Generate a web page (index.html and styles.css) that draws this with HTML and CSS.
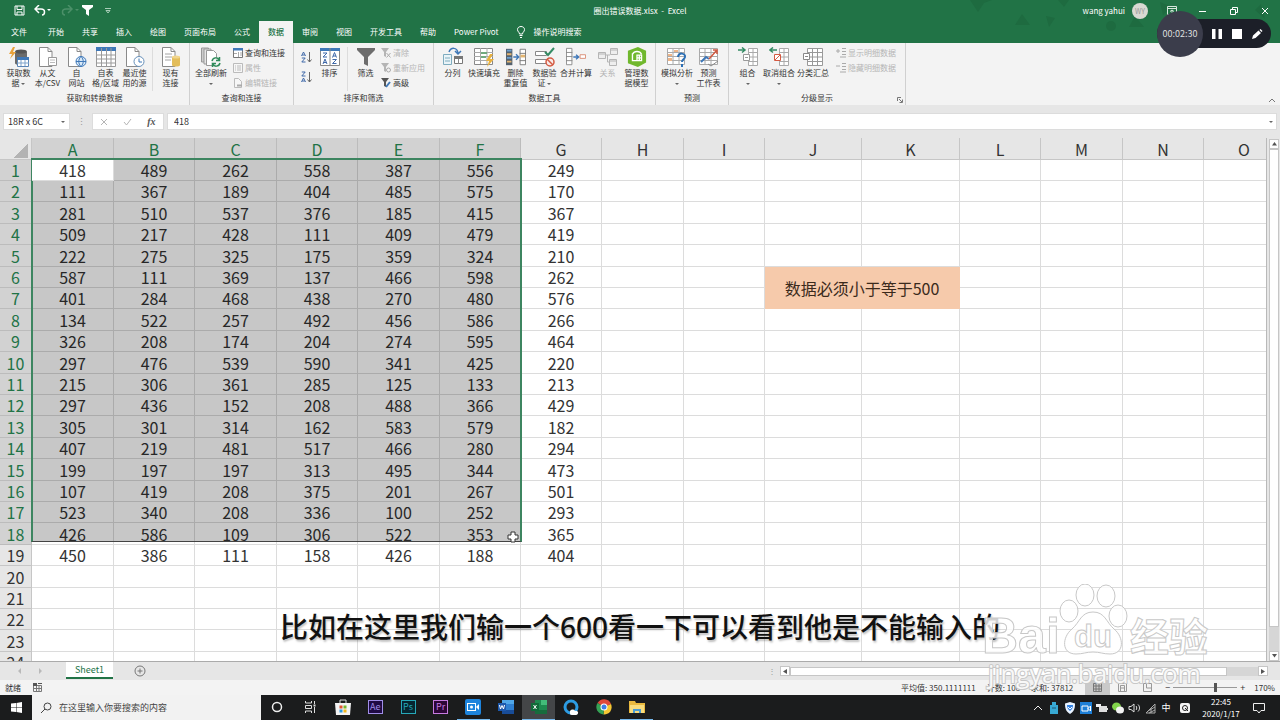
FILE: index.html
```html
<!DOCTYPE html>
<html lang="zh-CN">
<head>
<meta charset="utf-8">
<title>圈出错误数据.xlsx - Excel</title>
<link rel="stylesheet" href="styles.css">
</head>
<body>
<svg class="defs" aria-hidden="true">
  <symbol id="page" viewBox="0 0 20 20"><path d="M1.500 .5h8.500l4 4v15h-12.500z" fill="#fff" stroke="#8a8a8a"/><path d="M10 .5v4h4" fill="none" stroke="#8a8a8a"/></symbol>
  <symbol id="getdata" viewBox="0 0 20 20"><path d="M6 5v11c0 3 12 3 12 0V5z" fill="#6b6b6b"/><ellipse cx="12" cy="4.500" rx="6" ry="2" fill="#555"/><path d="M4 0L0 7h3L1 12l6-7H4l2-5z" fill="#e9a23b"/><path d="M8.500 10.500h11v9h-11z" fill="#fff" stroke="#5a84b5"/><path d="M8 10h12v3H8z" fill="#3f78b8"/><path d="M12 13v6M16 13v6M8 16h12" stroke="#7fa3cb"/></symbol>
  <symbol id="csv" viewBox="0 0 20 20"><use href="#page" width="20" height="20"/><path d="M10.500 10.500h8v8h-8z" fill="#fff" stroke="#999"/><path d="M12 13h5M12 15.500h5" stroke="#bbb"/></symbol>
  <symbol id="web" viewBox="0 0 20 20"><use href="#page" width="20" height="20"/><circle cx="14" cy="14.500" r="5" fill="#d9e9f7" stroke="#3f78b8"/><path d="M9 14.500h10M14 9.500c-3 3-3 7 0 10c3-3 3-7 0-10" fill="none" stroke="#3f78b8"/></symbol>
  <symbol id="table" viewBox="0 0 20 20"><path d="M.5.5h19v19H.5z" fill="#fff" stroke="#999"/><path d="M0 0h20v4H0z" fill="#3f78b8"/><path d="M5.500 1v18M10.500 1v18M15 1v18M0 8h20M0 12h20M0 16h20" stroke="#9a9a9a"/></symbol>
  <symbol id="recent" viewBox="0 0 20 20"><use href="#page" width="20" height="20"/><circle cx="14" cy="14.500" r="5" fill="#fff" stroke="#668fb9"/><path d="M14 11.500v3.500h3" fill="none" stroke="#3f78b8"/></symbol>
  <symbol id="conn" viewBox="0 0 20 20"><use href="#page" width="20" height="20"/><path d="M4 7h7M4 10h7M4 13h6" stroke="#a4a4a4"/><path d="M11 10v8c0 2 8 2 8 0v-8z" fill="#e3bd59"/><ellipse cx="15" cy="10" rx="4" ry="1.500" fill="#f1d58b"/></symbol>
  <symbol id="refresh" viewBox="0 0 20 20"><path d="M.5 1h7v14h-7z" fill="#ccc" stroke="#999"/><path d="M3 2h7v15H3z" fill="#e6e6e6" stroke="#999"/><path d="M5.500 3.500h7l3 3v12h-10z" fill="#fff" stroke="#999"/><circle cx="15" cy="15" r="5" fill="#f3f3f3"/><path d="M11 14c1-4 6-4 7-1M19 16c-1 4-6 4-7 1M18.500 10v3.500H15M11.500 20v-3.500H15" fill="none" stroke="#2f8b5b" stroke-width="1.500"/></symbol>
  <symbol id="panel" viewBox="0 0 10 10"><path d="M.5.5h9v9h-9z" fill="#fff" stroke="#777"/><path d="M0 0h10v2.500H0z" fill="#3f78b8"/><path d="M5.500 4v5M7 5h2M7 7h2M1 5.500h3" stroke="#aaa"/></symbol>
  <symbol id="props" viewBox="0 0 10 10"><path d="M.5.5h9v9h-9z" fill="#f6f6f6" stroke="#bbb"/><path d="M2 3h1M2 5h1M2 7h1M4 3h4M4 5h4M4 7h4" stroke="#bbb"/></symbol>
  <symbol id="links" viewBox="0 0 10 10"><path d="M1.500.5h4l3 3v6h-7z" fill="#f6f6f6" stroke="#bbb"/><path d="M4 7.500h5" stroke="#aaa" stroke-width="2"/></symbol>
  <symbol id="az" viewBox="0 0 11 12"><path d="M.5 5L2.500 1L4.500 5M1.200 4h2.600M.8 7h3.400L.8 11h3.700" fill="none" stroke="#3f68a8"/><path d="M8.500 1v10M6.500 8.500l2 2.500l2-2.500" fill="none" stroke="#666"/></symbol>
  <symbol id="za" viewBox="0 0 11 12"><path d="M.8 1h3.400L.8 5h3.700M.5 11l2-4l2 4M1.200 10h2.600" fill="none" stroke="#3f68a8"/><path d="M8.500 1v10M6.500 8.500l2 2.500l2-2.500" fill="none" stroke="#666"/></symbol>
  <symbol id="sort" viewBox="0 0 20 18"><path d="M.5.500h19v17H.5z" fill="#fff" stroke="#888"/><path d="M0 0h20v3H0z" fill="#3f78b8"/><path d="M10 0v18" stroke="#888"/><path d="M3 5h4L3 9h4M12.500 9.500l2-5l2 5M13 8h3M3 16l2-5l2 5M3.500 14.500h3M12.500 11.500h4l-4 4h4" fill="none" stroke="#3f68a8"/></symbol>
  <symbol id="funnel" viewBox="0 0 20 20"><path d="M1 1h18v2l-7 7v9l-4-2v-7L1 3z" fill="#6d6d6d"/></symbol>
  <symbol id="fclear" viewBox="0 0 10 10"><path d="M0 0h8L5 4v5L3 8V4z" fill="#b5b5b5"/><path d="M5.500 5l4 4.500M9.500 5l-4 4.500" stroke="#aaa"/></symbol>
  <symbol id="freapply" viewBox="0 0 10 10"><path d="M0 0h8L5 4v5L3 8V4z" fill="#b5b5b5"/><circle cx="7.500" cy="7" r="2" fill="#f3f3f3" stroke="#aaa"/></symbol>
  <symbol id="fadv" viewBox="0 0 10 10"><path d="M0 0h8L5 4v5L3 8V4z" fill="#555"/><path d="M5 9l4-5" stroke="#3f78b8" stroke-width="2"/></symbol>
  <symbol id="split" viewBox="0 0 20 20"><path d="M.5 7.500h8v10h-8z" fill="#eaf4f8" stroke="#7facbf"/><path d="M2 11h5M2 14h5" stroke="#7facbf"/><path d="M11.500 9.500h8v7h-8z" fill="#fff" stroke="#777"/><path d="M11 9h9v3h-9z" fill="#777"/><path d="M15.500 12v5" stroke="#888"/><path d="M6 5c2-5 8-5 9 1M12 4l3 3l3-3" fill="none" stroke="#3f78b8" stroke-width="1.500"/></symbol>
  <symbol id="flash" viewBox="0 0 20 20"><path d="M.5 1.500h18v16H.5z" fill="#fff" stroke="#888"/><path d="M0 5.500h19M0 9.500h19M0 13.500h19M6.500 1v16M13 1v16" stroke="#a9a9a9"/><path d="M7 6h6M7 10h5" stroke="#71a97f" stroke-width="2"/><path d="M16 7l-4 7h3l-2 6l7-8h-4l3-5z" fill="#e9b23f"/></symbol>
  <symbol id="dedupe" viewBox="0 0 22 20"><path d="M0 1h7v18H0z" fill="#52616f"/><path d="M1 3h5M1 11h5" stroke="#6ca0d0" stroke-width="2"/><path d="M1 7h5M1 15h5" stroke="#e3b571" stroke-width="2"/><path d="M15.500 1.500h6v17h-6zM15 6h7M15 14h7" fill="#fff" stroke="#777"/><path d="M16 9h5" stroke="#e3b571" stroke-width="3"/><path d="M8 10h6M11 7l3 3l-3 3" fill="none" stroke="#3f78b8" stroke-width="1.500"/></symbol>
  <symbol id="valid" viewBox="0 0 20 20"><path d="M.5 4.500h11v4H.5zM.5 12.500h11v4H.5z" fill="#fff" stroke="#888"/><path d="M10 5l3 3l6-7" fill="none" stroke="#358b64" stroke-width="2"/><circle cx="15" cy="15" r="4" fill="#f8ebe8" stroke="#d45a42" stroke-width="1.500"/><path d="M12 12l6 6" stroke="#d45a42" stroke-width="1.500"/></symbol>
  <symbol id="merge" viewBox="0 0 22 20"><path d="M.5.5h6v18h-6zM0 5h7M0 9.500h7M0 14h7" fill="#fff" stroke="#888"/><path d="M8 10h6M11 7.500l3 2.500l-3 2.500" fill="none" stroke="#3f78b8" stroke-width="1.500"/><path d="M15.500 7.500h6v4h-6z" fill="#fff" stroke="#d88a72"/></symbol>
  <symbol id="relation" viewBox="0 0 20 20"><path d="M.5 5.500h7v6h-7zM12.500 1.500h7v6h-7zM11.500 12.500h7v6h-7z" fill="#eee" stroke="#b5b5b5"/><path d="M8 8h4M9.500 8v7h2M1 7h6M13 3h6M12 14h6" fill="none" stroke="#b5b5b5"/></symbol>
  <symbol id="model" viewBox="0 0 20 22"><path d="M0 4L11 0l9 4v13l-9 5l-11-4z" fill="#70b82d"/><path d="M5 8c2-4 8-4 10 0M5 7v8h5M10 9h5v6h-5zM12.500 9v6M10 12h5" fill="none" stroke="#fff" stroke-width="1.500"/></symbol>
  <symbol id="whatif" viewBox="0 0 20 20"><path d="M.5 1.500h17v16H.5zM0 5.500h18M0 9.500h18M0 13.500h18M6 1v17M12 1v17" fill="#fff" stroke="#aaa"/><path d="M1 7h4v2H1zM1 11h4v3H1zM7 3h4v2H7z" fill="#eeb588"/><path d="M11 10c0-5 8-4 7 0c0 2-3 2-3 5M15 17v3" fill="none" stroke="#2d70b5" stroke-width="2"/></symbol>
  <symbol id="forecast" viewBox="0 0 20 20"><path d="M.5 1.500h18v16H.5zM0 5.500h18M0 9.500h18M0 13.500h18M6 1v17M12 1v17" fill="#fff" stroke="#aaa"/><path d="M2 15l5-5l3 2" fill="none" stroke="#3f78b8" stroke-width="2"/><path d="M10 12l8-9M14 3h4v4" fill="none" stroke="#cf5840" stroke-width="1.500"/><path d="M9 17l3 2l7-5" fill="none" stroke="#888"/></symbol>
  <symbol id="group" viewBox="0 0 20 20"><path d="M10.500 1.500h9v17h-9zM10 5.500h10M10 10h10M10 14.500h10M15 1v17" fill="#fff" stroke="#aaa"/><path d="M0 3h7M4 .5L7 3L4 5.500" fill="none" stroke="#358b64" stroke-width="1.500"/><path d="M5.500 7.500h6v6h-6zM7 10.500h3" fill="#fff" stroke="#999"/></symbol>
  <symbol id="ungroup" viewBox="0 0 20 20"><path d="M10.500 1.500h9v17h-9zM10 5.500h10M10 10h10M10 14.500h10M15 1v17" fill="#fff" stroke="#aaa"/><path d="M8 3H1M4 .5L1 3l3 2.500" fill="none" stroke="#358b64" stroke-width="1.500"/><path d="M5.500 7.500h6v6h-6zM6 13l5-5" fill="#fff" stroke="#d45a42"/></symbol>
  <symbol id="subtotal" viewBox="0 0 20 20"><path d="M4.500 1.500h15v17h-15zM4 5.500h16M4 10h16M4 14.500h16M9.500 1v17M14.500 1v17" fill="#fff" stroke="#999"/><path d="M.5 6.500h6v6h-6zM2 9.500h3" fill="#fff" stroke="#888"/></symbol>
  <symbol id="detail" viewBox="0 0 10 10"><path d="M0 3h4M2 1v4M6 .5h4M6 3.500h4M6 6.500h4M4 9h6" stroke="#aaa" fill="none"/></symbol>
  <symbol id="nodetail" viewBox="0 0 10 10"><path d="M0 3h4M6 .5h4M6 3.500h4M6 6.500h4M4 9h6" stroke="#aaa" fill="none"/></symbol>
</svg>

<header class="topbar">
  <svg class="pattern" viewBox="0 0 310 42" aria-hidden="true"><path d="M0 0l8 12L14 3l8-3zM52 14l8 11H45zM76 16l9 2-6 9zM88 0l6 7 5-7zM118 8l8 5-9 6zM165 16l9 11h-15zM190 2l12 5-9 8zM285 10l10 9-4-15z"/><circle cx="141" cy="26" r="5"/></svg>
  <div class="titlebar">
    <div class="quick">
      <button aria-label="保存"><svg width="11" height="11" viewBox="0 0 11 11"><path d="M1 1h9v9H1zM3 1v3.500h5V1M3 10V7h5v3" fill="none" stroke="#fff"/></svg></button>
      <button aria-label="撤消"><svg width="18" height="11" viewBox="0 0 18 11"><path d="M5 0L1 4l4 4M1 4h6c5 0 4 6 1 6" fill="none" stroke="#fff" stroke-width="1.500"/><path d="M13 4h4l-2 2z" fill="#fff"/></svg></button>
      <button aria-label="恢复" disabled><svg width="18" height="11" viewBox="0 0 18 11"><path d="M7 0l4 4-4 4M11 4H5c-5 0-4 6-1 6" fill="none" stroke="#4c9069" stroke-width="1.500"/><path d="M14 4h4l-2 2z" fill="#4c9069"/></svg></button>
      <button aria-label="筛选"><svg width="11" height="11" viewBox="0 0 11 11"><path d="M0 0h11v2L7 5v6L4 9V5L0 2z" fill="#fff"/></svg></button>
      <button aria-label="自定义"><svg width="6" height="6" viewBox="0 0 6 6"><path d="M0 .5h6M1 2.500h4L3 5z" fill="none" stroke="#a9cdb8"/></svg></button>
    </div>
    <div class="doc">圈出错误数据.xlsx&nbsp; -&nbsp; Excel</div>
    <div class="account"><span>wang yahui</span><span class="avatar">WY</span>
      <button aria-label="功能区选项"><svg width="10" height="9" viewBox="0 0 10 9"><path d="M.5.500h9v8h-9zM0 2.500h10M5 7V4M3 5.500L5 4l2 1.500" fill="none" stroke="#d7e8dd"/></svg></button>
      <button aria-label="最小化"><svg width="8" height="8" viewBox="0 0 8 8"><path d="M0 4.500h7" stroke="#fff"/></svg></button>
      <button aria-label="还原"><svg width="8" height="8" viewBox="0 0 8 8"><path d="M.5 2.500h5v5h-5zM2.500 2V.500h5v5H6" fill="none" stroke="#fff"/></svg></button>
      <button aria-label="关闭"><svg width="8" height="8" viewBox="0 0 8 8"><path d="M1 1l6 6M7 1L1 7" stroke="#fff"/></svg></button>
    </div>
  </div>
  <nav class="tabs">
    <button class="file">文件</button><button>开始</button><button>共享</button><button>插入</button><button>绘图</button><button>页面布局</button><button>公式</button><button class="active">数据</button><button>审阅</button><button>视图</button><button>开发工具</button><button>帮助</button><button>Power Pivot</button>
    <button class="tell"><svg width="8" height="12" viewBox="0 0 8 12"><path d="M2.500 8C2.500 6 .5 6 .5 3.500C.5-.5 7.500-.5 7.500 3.500C7.500 6 5.500 6 5.500 8zM2.500 9.500h3M3 11.500h2" fill="none" stroke="#fff"/></svg>操作说明搜索</button>
  </nav>
</header>

<section class="ribbon" aria-label="数据">
  <div class="group g-get"><div class="tools">
    <button class="tool"><svg><use href="#getdata"/></svg>获取数<br>据 <i class="caret"></i></button>
    <button class="tool"><svg><use href="#csv"/></svg>从文<br>本/CSV</button>
    <button class="tool"><svg><use href="#web"/></svg>自<br>网站</button>
    <button class="tool"><svg><use href="#table"/></svg>自表<br>格/区域</button>
    <button class="tool"><svg><use href="#recent"/></svg>最近使<br>用的源</button>
    <span class="rule"></span>
    <button class="tool"><svg><use href="#conn"/></svg>现有<br>连接</button>
  </div><h2>获取和转换数据</h2></div>
  <div class="group g-query"><div class="tools">
    <button class="tool wide"><svg><use href="#refresh"/></svg>全部刷新<br><i class="caret"></i></button>
    <div class="stack"><button><svg><use href="#panel"/></svg>查询和连接</button><button disabled><svg><use href="#props"/></svg>属性</button><button disabled><svg><use href="#links"/></svg>编辑链接</button></div>
  </div><h2>查询和连接</h2></div>
  <div class="group g-sort"><div class="tools">
    <div class="azs"><button aria-label="升序"><svg><use href="#az"/></svg></button><button aria-label="降序"><svg><use href="#za"/></svg></button></div>
    <button class="tool"><svg><use href="#sort"/></svg>排序</button>
    <span class="rule"></span>
    <button class="tool"><svg><use href="#funnel"/></svg>筛选</button>
    <div class="stack"><button disabled><svg><use href="#fclear"/></svg>清除</button><button disabled><svg><use href="#freapply"/></svg>重新应用</button><button><svg><use href="#fadv"/></svg>高级</button></div>
  </div><h2>排序和筛选</h2></div>
  <div class="group g-tools"><div class="tools">
    <button class="tool"><svg><use href="#split"/></svg>分列</button>
    <button class="tool wide"><svg><use href="#flash"/></svg>快速填充</button>
    <button class="tool"><svg><use href="#dedupe"/></svg>删除<br>重复值</button>
    <button class="tool"><svg><use href="#valid"/></svg>数据验<br>证 <i class="caret"></i></button>
    <button class="tool wide"><svg><use href="#merge"/></svg>合并计算</button>
    <button class="tool" disabled><svg><use href="#relation"/></svg>关系</button>
    <button class="tool"><svg><use href="#model"/></svg>管理数<br>据模型</button>
  </div><h2>数据工具</h2></div>
  <div class="group g-fore"><div class="tools">
    <button class="tool wide"><svg><use href="#whatif"/></svg>模拟分析<br><i class="caret"></i></button>
    <button class="tool"><svg><use href="#forecast"/></svg>预测<br>工作表</button>
  </div><h2>预测</h2></div>
  <div class="group g-outline"><div class="tools">
    <button class="tool"><svg><use href="#group"/></svg>组合<br><i class="caret"></i></button>
    <button class="tool wide"><svg><use href="#ungroup"/></svg>取消组合<br><i class="caret"></i></button>
    <button class="tool wide"><svg><use href="#subtotal"/></svg>分类汇总</button>
    <div class="stack"><button disabled><svg><use href="#detail"/></svg>显示明细数据</button><button disabled><svg><use href="#nodetail"/></svg>隐藏明细数据</button></div>
  </div><h2>分级显示</h2>
    <svg class="launcher" width="6" height="6" viewBox="0 0 6 6"><path d="M.5 4V.500H4M2 2l3 3M5.500 2.500v3h-3" fill="none" stroke="#777"/></svg>
  </div>
  <button class="collapse" aria-label="折叠功能区"><svg width="8" height="5" viewBox="0 0 8 5"><path d="M1 4l3-3 3 3" fill="none" stroke="#777"/></svg></button>
</section>

<section class="formula">
  <div class="namebox"><input aria-label="名称框" value="18R x 6C"><i class="caret"></i></div>
  <span class="dots">⋮</span>
  <div class="fx"><button aria-label="取消"><svg width="8" height="8" viewBox="0 0 8 8"><path d="M1 1l6 6M7 1L1 7" stroke="#b5b5b5"/></svg></button><button aria-label="输入"><svg width="9" height="8" viewBox="0 0 9 8"><path d="M1 4l2.500 3L8 1" fill="none" stroke="#b5b5b5"/></svg></button><button class="fn" aria-label="插入函数">fx</button></div>
  <div class="content"><input aria-label="编辑栏" value="418"><i class="caret"></i></div>
</section>

<main class="work">
  <div class="sheet">
    <table>
      <colgroup id="cols"></colgroup>
      <thead><tr id="letters"></tr></thead>
      <tbody id="rows"></tbody>
    </table>
    <div class="selection"></div>
    <svg class="cursor" width="12" height="12" viewBox="0 0 12 12"><path d="M4 1h4v3h3v4H8v3H4V8H1V4h3z" fill="#fff" stroke="#333"/></svg>
  </div>
  <div class="vscroll"><button aria-label="向上"><svg width="5" height="4" viewBox="0 0 5 4"><path d="M0 3.500h5L2.500 0z" fill="#555"/></svg></button><span class="thumb"></span><span class="track"></span><button aria-label="向下"><svg width="5" height="4" viewBox="0 0 5 4"><path d="M0 0h5L2.500 3.500z" fill="#555"/></svg></button></div>
</main>

<div class="sheetbar">
  <span class="nav"><svg width="26" height="6" viewBox="0 0 26 6"><path d="M4 0L1 3l3 3zM22 0l3 3-3 3z" fill="#b9b9b9"/></svg></span>
  <button class="sheettab">Sheet1</button>
  <button class="add" aria-label="新工作表"><svg width="12" height="12" viewBox="0 0 12 12"><circle cx="6" cy="6" r="5" fill="none" stroke="#777"/><path d="M6 3.500v5M3.500 6h5" stroke="#777"/></svg></button>
  <div class="hscroll"><span class="grip">⋮</span><button aria-label="向左"><svg width="4" height="5" viewBox="0 0 4 5"><path d="M4 0v5L0 2.500z" fill="#555"/></svg></button><span class="thumb"></span><span class="track"></span><button aria-label="向右"><svg width="4" height="5" viewBox="0 0 4 5"><path d="M0 0v5l4-2.500z" fill="#555"/></svg></button></div>
</div>

<div class="status">
  <span>就绪</span>
  <svg width="9" height="9" viewBox="0 0 9 9"><path d="M.5 2.500h8v6h-8zM0 5.500h9M3.500 3v5M6 3v5" fill="none" stroke="#777"/><path d="M0 0h4v3H0zM5 0h4v1H5z" fill="#555"/></svg>
  <div class="stats"><span>平均值: 350.1111111</span><span>计数: 108</span><span>求和: 37812</span></div>
  <div class="views">
    <button class="on" aria-label="普通"><svg width="9" height="9" viewBox="0 0 9 9"><path d="M.5.500h8v8h-8zM3 0v9M6 0v9M0 3h9M0 6h9" fill="none" stroke="#777"/></svg></button>
    <button aria-label="页面布局"><svg width="9" height="9" viewBox="0 0 9 9"><path d="M.5.500h8v8h-8zM2.500 2.500h4v6M2.500 5h4M2.500 2.500v6" fill="none" stroke="#999"/></svg></button>
    <button aria-label="分页预览"><svg width="9" height="9" viewBox="0 0 9 9"><path d="M.5.500h8v8h-8zM3.500 0v5h5" fill="none" stroke="#999"/></svg></button>
  </div>
  <label class="zoom"><span>−</span><input type="range" min="0" max="100" value="66" aria-label="缩放"><span>+</span></label>
  <span class="pct">170%</span>
</div>

<footer class="taskbar">
  <button class="start" aria-label="开始"><svg width="11" height="11" viewBox="0 0 11 11"><path d="M0 1.500L5 1v4H0zM5.500 1L11 0v5H5.500zM0 5.500h5v4.500L0 9.500zM5.500 5.500H11V11l-5.500-1z" fill="#fff"/></svg></button>
  <label class="search"><svg width="12" height="12" viewBox="0 0 12 12"><circle cx="7.500" cy="4.500" r="3.500" fill="none" stroke="#444"/><path d="M5 7L1 11" stroke="#444"/></svg><input aria-label="搜索" placeholder="在这里输入你要搜索的内容"></label>
  <div class="apps">
    <button aria-label="Cortana"><svg width="12" height="12" viewBox="0 0 12 12"><circle cx="6" cy="6" r="4.500" fill="none" stroke="#eee" stroke-width="1.500"/></svg></button>
    <button aria-label="任务视图"><svg width="12" height="12" viewBox="0 0 12 12"><path d="M1.500 0v2h6V0M1.500 4.500h6v3h-6zM1.500 12v-2h6v2M10.500 0v3M10.500 6v6" fill="none" stroke="#ddd"/><path d="M9.500 3.500h2v2h-2z" fill="#ddd"/></svg></button>
    <button aria-label="应用商店"><svg width="16" height="16" viewBox="0 0 16 16"><path d="M5 5V1h6v4" fill="none" stroke="#ddd"/><path d="M0 4h16l-1 12H1z" fill="#f4f4f4"/><path d="M4.500 6.500h3v3h-3z" fill="#e0512f"/><path d="M8.500 6.500h3v3h-3z" fill="#77b52b"/><path d="M4.500 10.500h3v3h-3z" fill="#2a9be0"/><path d="M8.500 10.500h3v3h-3z" fill="#f3b71b"/></svg></button>
    <button><span class="adobe ae">Ae</span></button>
    <button><span class="adobe ps">Ps</span></button>
    <button><span class="adobe pr">Pr</span></button>
    <button class="run" aria-label="录屏"><svg width="16" height="16" viewBox="0 0 16 16"><rect width="16" height="16" rx="2" fill="#1d84dd"/><rect x="2.500" y="4.500" width="8" height="7" fill="none" stroke="#fff"/><circle cx="6.500" cy="8" r="1.500" fill="#fff"/><path d="M11 8l3-3v6z" fill="#fff"/></svg></button>
    <button aria-label="Word"><svg width="16" height="14" viewBox="0 0 16 14"><path d="M4 0h12v14H4z" fill="#2f7fd0"/><path d="M4 0h12v4H4z" fill="#50a7e8"/><path d="M4 10h12v4H4z" fill="#184c98"/><path d="M0 3h8v8H0z" fill="#1d58ac"/><path d="M1.500 5l1 4L4 5.500L5.500 9l1-4" fill="none" stroke="#fff"/></svg></button>
    <button class="run current" aria-label="Excel"><svg width="16" height="14" viewBox="0 0 16 14"><path d="M4 0h12v14H4z" fill="#1e8b50"/><path d="M10 0h6v5h-6z" fill="#43bd7a"/><path d="M4 10h12v4H4z" fill="#176c3d"/><path d="M0 3h8v8H0z" fill="#126b3a"/><path d="M2.500 5l3 4M5.500 5l-3 4" stroke="#fff"/></svg></button>
    <button aria-label="QQ浏览器"><svg width="16" height="16" viewBox="0 0 16 16"><circle cx="8" cy="8" r="6" fill="none" stroke="#2d9ce3" stroke-width="3"/><path d="M7 14c-1-3 3-5 5-2c4-1 4 4 1 4H9c-2 0-2-1-2-2" fill="#fff"/></svg></button>
    <button aria-label="Chrome"><svg width="16" height="16" viewBox="0 0 16 16"><path d="M8 8L1.500 4A7.500 7.500 0 0 1 15 5z" fill="#e0483b"/><path d="M8 8l7-3a7.500 7.500 0 0 1-7.500 10.500z" fill="#f6c733"/><path d="M8 8l-.5 7.500A7.500 7.500 0 0 1 1.500 4z" fill="#35a255"/><circle cx="8" cy="8" r="3.500" fill="#fff"/><circle cx="8" cy="8" r="2.500" fill="#3f7ee8"/></svg></button>
    <button class="run" aria-label="文件资源管理器"><svg width="16" height="14" viewBox="0 0 16 14"><path d="M0 1h6l1 2h9v10H0z" fill="#e9b93f"/><path d="M1 5h14v8H1z" fill="#f8dc7e"/><path d="M4 9h8v4h-2v-2H6v2H4z" fill="#4a9bd4"/></svg></button>
  </div>
  <div class="tray">
    <svg viewBox="0 0 12 12"><path d="M2 8l4-4 4 4" fill="none" stroke="#eee"/></svg>
    <svg viewBox="0 0 12 12"><path d="M4 0h4v3h2v9H2V3h2z" fill="#38a9d3"/><path d="M4 6h4" stroke="#1c5978"/></svg>
    <svg viewBox="0 0 12 12"><path d="M1 1.500L6 0l5 1.500c0 5-1 8-5 10.500C2 9.500 1 6.500 1 1.500" fill="#e9f3ff"/><path d="M3 3h6c0 3-1 4-3 6C4 7 3 6 3 3" fill="#3382e3"/><path d="M4 5l2 2 2-2" fill="none" stroke="#fff"/></svg>
    <svg viewBox="0 0 12 12"><path d="M0 0h12v12H0z" fill="#1d7fd7"/><path d="M2 4h6v5H2zM8 6.500L10.500 4v5z" fill="none" stroke="#fff"/></svg>
    <svg viewBox="0 0 12 12"><path d="M3 4h8v6H3zM11 6h1v2h-1z" fill="#ddd"/><path d="M0 2h5v3H0z" fill="#eee"/></svg>
    <svg viewBox="0 0 12 12"><ellipse cx="4.500" cy="4.500" rx="4.500" ry="4" fill="#82d34b"/><ellipse cx="8" cy="8" rx="4" ry="3.500" fill="#f3f3f3"/></svg>
    <svg viewBox="0 0 12 12"><path d="M1 4.500h2L6 2v8L3 7.500H1zM8 4c1 1 1 3 0 4M10 2.500c2 2 2 5 0 7" fill="none" stroke="#ddd"/></svg>
    <svg viewBox="0 0 12 12"><path d="M2 11L11 2v9zM4 9l7-4M5 11l6-3M7 11V6" fill="none" stroke="#aaa"/></svg>
    <span class="ime">中</span>
    <svg viewBox="0 0 12 12"><rect x="1" y="1" width="10" height="10" rx="2" fill="#f5f5f5"/><circle cx="6" cy="6" r="2.500" fill="none" stroke="#222"/><path d="M6 6l3 3" stroke="#222"/></svg>
    <time><span>22:45</span><span>2020/1/17</span></time>
    <svg viewBox="0 0 12 12"><path d="M.5 1.500h11v7H8L6 11L4 8.500H.5z" fill="none" stroke="#eee"/></svg>
  </div>
</footer>

<div class="recorder"><span class="timer">00:02:30</span>
  <button aria-label="暂停"><svg width="12" height="12" viewBox="0 0 12 12"><path d="M1 1h3.500v10H1zM7.500 1H11v10H7.500z" fill="#fff"/></svg></button>
  <button aria-label="停止"><svg width="12" height="12" viewBox="0 0 12 12"><path d="M1 1h10v10H1z" fill="#fff"/></svg></button>
  <button aria-label="画笔"><svg width="12" height="12" viewBox="0 0 12 12"><path d="M1 11l1-3.500L7.500 2.500L10 5L4.500 10zM8.500 2l1-1L11.500 3l-1 1z" fill="#fff"/></svg></button>
</div>

<p class="caption">比如在这里我们输一个600看一下可以看到他是不能输入的</p>

<svg class="watermark" viewBox="0 0 240 112" role="img" aria-label="Baidu经验 jingyan.baidu.com">
  <g class="outline">
    <ellipse cx="87" cy="27" rx="9" ry="11"/>
    <ellipse cx="103" cy="11" rx="9" ry="11"/>
    <ellipse cx="124" cy="12" rx="9" ry="11"/>
    <ellipse cx="136" cy="32" rx="9" ry="11"/>
    <path d="M111 28c-12 0-13 10-21 17c-10 8-11 25 4 25c7 0 10-2 17-2s10 2 17 2c15 0 14-17 4-25c-8-7-9-17-21-17z"/>
    <text x="0" y="69" class="bai">Bai</text>
    <text x="148" y="67" class="jing">经验</text>
    <text x="92" y="63" class="du">du</text>
  </g>
  <text x="6" y="99" class="url">jingyan.baidu.com</text>
</svg>
<script src="script.js"></script>
</body>
</html>
```

FILE: styles.css
```css
* { box-sizing: border-box; }
body {
  margin: 0;
  height: 100vh;
  display: flex;
  flex-direction: column;
  overflow: hidden;
  position: relative;
  background: #e6e6e6;
  color: #333;
  font: 8px/10px "Noto Sans CJK SC", "Noto Sans", sans-serif;
}
button, input { font: inherit; color: inherit; border: 0; background: none; padding: 0; margin: 0; min-width: 0; outline: 0; }
button { display: flex; align-items: center; justify-content: center; white-space: nowrap; }
svg { flex: none; display: block; }
.defs { position: absolute; width: 0; height: 0; }
.caret { display: inline-block; border: 2px solid transparent; border-top-color: #666; border-bottom: 0; vertical-align: middle; }

/* title and tabs */
.topbar { position: relative; flex: none; background: #217346; color: #fff; }
.pattern { position: absolute; right: 0; top: 0; width: 310px; height: 42px; fill: #1e6b40; }
.titlebar { position: relative; height: 21px; display: grid; grid-template-columns: 1fr auto 1fr; align-items: center; }
.quick { display: flex; align-items: center; gap: 9px; padding-left: 14px; }
.quick button:nth-child(4) { margin-left: -6px; }
.quick button:nth-child(5) { margin-left: 3px; }
.account { display: flex; align-items: center; justify-content: flex-end; }
.account button { width: 31px; height: 20px; }
.avatar { width: 16px; height: 16px; margin: 0 8px 0 7px; border-radius: 50%; background: #d9d9d3; color: #999; font-size: 7px; line-height: 16px; text-align: center; }
.tabs { position: relative; display: flex; height: 22px; padding-left: 2px; }
.tabs button { padding: 0 9px; }
.tabs .file { margin-right: 3px; }
.tabs .active { background: #f3f3f3; color: #217346; font-weight: 500; }
.tabs .tell { gap: 9px; }

/* ribbon */
.ribbon { flex: none; display: flex; height: 62px; background: #f3f3f3; position: relative; color: #333; }
.group { position: relative; display: flex; flex-direction: column; justify-content: space-between; padding: 4px 4px 2px; border-right: 1px solid #d0d0d0; }
.group h2 { margin: 0; font-size: 8px; font-weight: 400; text-align: center; line-height: 10px; }
.tools { display: flex; align-items: flex-start; }
.tool { display: block; width: 29px; text-align: center; line-height: 10px; }
.tool.wide { width: 34px; }
.tool svg { width: 20px; height: 20px; margin: 0 auto 1px; }
button:disabled { color: #b5b5b5; }
.rule { width: 1px; height: 44px; margin: 0 3px; background: #dcdcdc; }
.stack { display: flex; flex-direction: column; align-items: flex-start; }
.stack button { height: 15px; gap: 2px; padding-bottom: 4px; }
.stack svg { width: 10px; height: 10px; }
.azs { display: flex; flex-direction: column; gap: 8px; padding: 4px 3px 0; }
.azs svg { width: 11px; height: 12px; }
.g-get { width: 190px; }
.g-query { width: 104px; }
.g-query .stack { padding-left: 5px; }
.g-sort { width: 140px; }
.g-sort .stack { padding-left: 1px; }
.g-tools { width: 222px; }
.g-fore { width: 73px; }
.g-outline { width: 177px; }
.g-outline .stack { padding-left: 6px; }
.launcher { position: absolute; right: 2px; bottom: 2px; }
.collapse { margin-left: auto; align-self: flex-end; width: 16px; height: 9px; }

/* formula bar */
.formula { flex: none; display: flex; height: 33px; padding: 8px 3px; background: #e6e6e6; font-size: 9px; }
.formula > div { background: #fff; display: flex; align-items: center; border: 1px solid #dcdcdc; }
.namebox { width: 67px; padding: 0 4px; }
.namebox input { flex: 1; }
.dots { width: 22px; text-align: center; color: #999; line-height: 17px; }
.fx { width: 72px; justify-content: space-around; margin-right: 3px; }
.fn { font: italic 700 10px "Liberation Serif", serif; color: #555; }
.content { flex: 1; padding: 0 3px 0 6px; }
.content input { flex: 1; }

/* worksheet */
.work { flex: 1; min-height: 0; display: flex; }
.sheet { flex: 1; min-width: 0; overflow: hidden; position: relative; background: #fff; border-right: 1px solid #b9b9b9; }
table { border-collapse: separate; border-spacing: 0; table-layout: fixed; width: 1285px; font-size: 16px; line-height: 20px; }
.c-head { width: 32px; }
.c-81 { width: 81px; }
.c-82 { width: 82px; }
.c-97 { width: 97px; }
.c-98 { width: 98px; }
th, td { padding: 0; font-weight: 400; text-align: center; border: 0 solid #dcdcdc; border-width: 0 1px 1px 0; }
th { background: #e6e6e6; border-color: #c6c6c6; }
thead tr { height: 22px; }
tbody tr { height: 21px; }
tbody tr:nth-child(5n), tbody tr:nth-child(5n+3) { height: 22px; }
td { color: #333; white-space: nowrap; }
th.sel { background: #d2d2d2; color: #217346; border-color: #bcbcbc; }
.corner { background: linear-gradient(135deg, #e6e6e6 50%, #b3b3b3 50%) 14px 6px / 14px 14px no-repeat #e6e6e6; }
td.active { position: relative; z-index: 2; background: #fff; }
td.note { background: #f6caab; border-color: #f6caab; color: #3b2a1c; }
.selection { position: absolute; left: 31px; top: 20px; width: 491px; height: 384px; background: rgba(0, 0, 0, .22); border: 2px solid #3d8560; border-bottom: 1px solid #444; }
.cursor { position: absolute; left: 507px; top: 393px; }
.vscroll { width: 13px; flex: none; display: flex; flex-direction: column; padding: 1px 1px 0 2px; }
.vscroll button { height: 10px; background: #fff; border: 1px solid #c6c6c6; }
.vscroll .thumb { flex: 20; background: #fff; border: 1px solid #c6c6c6; }
.vscroll .track { flex: 1; background: #d6d6d6; }

/* sheet tabs and status */
.sheetbar { flex: none; height: 19px; display: flex; align-items: stretch; border-top: 1px solid #ababab; background: #e6e6e6; }
.nav { width: 66px; padding: 6px 0 0 17px; }
.sheettab { width: 47px; height: 17px; background: #fff; color: #217346; border-bottom: 2px solid #217346; font-size: 9px; }
.add { width: 54px; }
.hscroll { margin-left: auto; width: 40%; display: flex; align-items: center; padding: 0 12px 0 0; }
.grip { width: 12px; color: #999; }
.hscroll button { width: 10px; height: 10px; background: #fff; border: 1px solid #c6c6c6; }
.hscroll .thumb { flex: 14; height: 9px; background: #fff; border: 1px solid #c6c6c6; }
.hscroll .track { flex: 1; height: 9px; background: #d6d6d6; }
.status { flex: none; height: 15px; display: flex; align-items: center; gap: 12px; padding: 0 5px; background: #f3f3f3; }
.stats { margin-left: auto; display: flex; gap: 11px; }
.views { display: flex; }
.views button { width: 25px; height: 15px; }
.views .on { background: #c9c9c9; }
.zoom { display: flex; align-items: center; gap: 3px; font-size: 9px; margin: 0 -3px 0 -7px; }
.zoom input { width: 64px; height: 9px; appearance: none; background: linear-gradient(#999, #999) center / 100% 1px no-repeat; }
.zoom input::-webkit-slider-thumb { appearance: none; width: 3px; height: 9px; background: #555; }

/* taskbar */
.taskbar { flex: none; height: 25px; display: flex; background: #1b1c1d; color: #fff; }
.start { width: 32px; }
.search { width: 229px; display: flex; align-items: center; gap: 7px; padding-left: 8px; background: #f2f2f2; color: #444; font-size: 9px; }
.search input { flex: 1; }
.search input::placeholder { color: #444; opacity: 1; }
.apps { display: flex; width: 392px; }
.apps button { flex: 1; border-bottom: 1px solid transparent; }
.apps .run { border-color: #76b9ed; }
.apps .current { background: #444648; }
.adobe { width: 15px; height: 14px; border: 1px solid; line-height: 12px; font-size: 9px; }
.ae { background: #1f0a44; color: #a18ee8; }
.ps { background: #062530; color: #27a8b8; }
.pr { background: #2c0636; color: #c67be0; }
.tray { margin-left: auto; display: flex; align-items: center; gap: 4px; padding-right: 15px; }
.tray svg { width: 12px; height: 12px; }
.ime { width: 12px; margin-right: 3px; font-size: 9px; text-align: center; }
time { display: flex; flex-direction: column; margin: 0 7px 0 5px; text-align: center; line-height: 12px; width: 42px; font-size: 8px; }

/* floating layers */
.recorder { position: absolute; right: 9px; top: 19px; height: 29px; display: flex; align-items: center; gap: 8px; padding-right: 8px; border-radius: 15px; background: #1c1f28; z-index: 5; }
.timer { width: 46px; height: 46px; border-radius: 50%; background: #3b3d4b; color: #ddd; font-size: 9px; line-height: 46px; text-align: center; }
.caption { position: absolute; left: 0; right: 0; bottom: 73px; margin: 0; text-align: center; font: 500 28px/40px "Noto Sans", "Noto Sans CJK SC", sans-serif; color: #111; text-shadow: 1px 2px 2px rgba(0, 0, 0, .25); white-space: nowrap; }
.watermark { position: absolute; right: 58px; bottom: 24px; width: 240px; height: 112px; z-index: 6; }
.outline { fill: rgba(255, 255, 255, .8); stroke: #c8c8c8; stroke-width: 1px; }
.bai { font: 700 50px "Liberation Sans", sans-serif; }
.du { font: 700 31px "Liberation Sans", sans-serif; }
.jing { font: 700 39px "Noto Sans CJK SC", sans-serif; }
.url { font: 25px "Open Sans", sans-serif; fill: rgba(255, 255, 255, .9); stroke: #c8c8c8; stroke-width: 2px; paint-order: stroke; }
```

FILE: script.js
```js
const data = [
  [418, 489, 262, 558, 387, 556, 249],
  [111, 367, 189, 404, 485, 575, 170],
  [281, 510, 537, 376, 185, 415, 367],
  [509, 217, 428, 111, 409, 479, 419],
  [222, 275, 325, 175, 359, 324, 210],
  [587, 111, 369, 137, 466, 598, 262],
  [401, 284, 468, 438, 270, 480, 576],
  [134, 522, 257, 492, 456, 586, 266],
  [326, 208, 174, 204, 274, 595, 464],
  [297, 476, 539, 590, 341, 425, 220],
  [215, 306, 361, 285, 125, 133, 213],
  [297, 436, 152, 208, 488, 366, 429],
  [305, 301, 314, 162, 583, 579, 182],
  [407, 219, 481, 517, 466, 280, 294],
  [199, 197, 197, 313, 495, 344, 473],
  [107, 419, 208, 375, 201, 267, 501],
  [523, 340, 208, 336, 100, 252, 293],
  [426, 586, 109, 306, 522, 353, 365],
  [450, 386, 111, 158, 426, 188, 404]
];
const letters = "ABCDEFGHIJKLMNO".split("");
const widths = ["head", 82, 81, 82, 81, 82, 81, 81, 82, 81, 97, 98, 81, 82, 81, 81];
const selectedRows = 18;
const selectedCols = 6;

document.getElementById("cols").innerHTML = widths.map(w => `<col class="c-${w}">`).join("");
document.getElementById("letters").innerHTML = '<th class="corner"></th>' +
  letters.map((l, i) => `<th scope="col"${i < selectedCols ? ' class="sel"' : ""}>${l}</th>`).join("");

let html = "";
for (let r = 0; r < 24; r++) {
  html += `<tr><th scope="row"${r < selectedRows ? ' class="sel"' : ""}>${r + 1}</th>`;
  for (let c = 0; c < letters.length; c++) {
    // J6:K7 is one merged cell
    if ((r === 5 || r === 6) && (c === 9 || c === 10)) {
      if (r === 5 && c === 9) html += '<td class="note" colspan="2" rowspan="2">数据必须小于等于500</td>';
      continue;
    }
    const value = data[r] && data[r][c] !== undefined ? data[r][c] : "";
    html += `<td${r === 0 && c === 0 ? ' class="active"' : ""}>${value}</td>`;
  }
  html += "</tr>";
}
document.getElementById("rows").innerHTML = html;
```
